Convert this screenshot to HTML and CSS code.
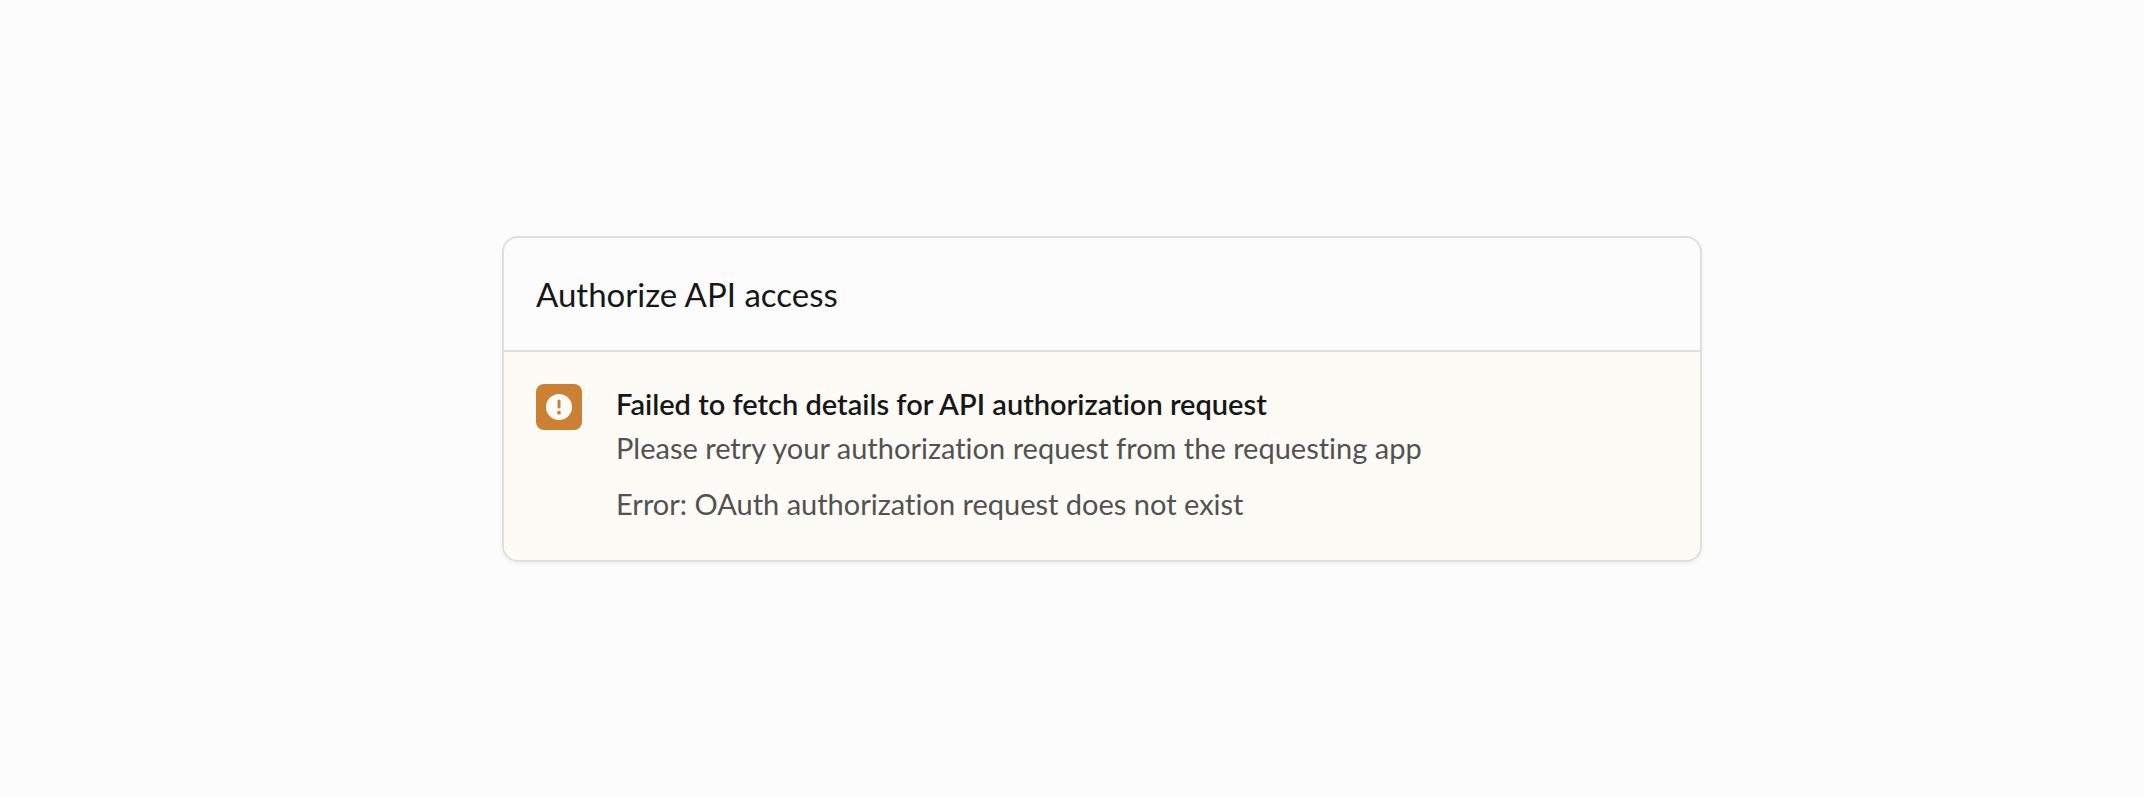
FILE: index.html
```html
<!DOCTYPE html>
<html lang="en">
<head>
    <meta charset="UTF-8">
    <meta name="viewport" content="width=device-width, initial-scale=1.0">
    <title>Authorize API access</title>
    <link rel="stylesheet" href="styles.css">
</head>
<body>

<main class="page">
    <section class="card">
        <header class="card-header">
            <h1>Authorize API access</h1>
        </header>
        <div class="alert" role="alert">
            <span class="alert-icon">
                <svg viewBox="0 0 26 26" width="26" height="26" aria-hidden="true">
                    <circle cx="13" cy="13" r="13" fill="#fdfcf7"/>
                    <rect x="11.5" y="5.4" width="3" height="9" rx="1.5" fill="#cb8034"/>
                    <circle cx="13" cy="18.7" r="1.9" fill="#cb8034"/>
                </svg>
            </span>
            <div class="alert-content">
                <h2>Failed to fetch details for API authorization request</h2>
                <p>Please retry your authorization request from the requesting app</p>
                <p class="error">Error: OAuth authorization request does not exist</p>
            </div>
        </div>
    </section>
</main>

</body>
</html>
```

FILE: styles.css
```css
:root {
    --bg: #fcfcfc;
    --border: #dfdfdf;
    --text: #171717;
    --text-light: #525252;
    --warning: #cb8034;
    --warning-bg: #fcfbf6;
}

* { box-sizing: border-box; }

body {
    margin: 0;
    background: var(--bg);
    color: var(--text);
    font-family: Lato, "Liberation Sans", sans-serif;
    font-variant-ligatures: none;
}

.page {
    display: flex;
    align-items: center;
    justify-content: center;
    min-height: 100vh;
    padding-left: 60px;
}

.card {
    width: 100%;
    max-width: 1200px;
    border: 2px solid var(--border);
    border-radius: 16px;
    overflow: hidden;
    box-shadow: 0 2px 4px rgba(0, 0, 0, 0.05);
}

.card-header {
    padding: 32px;
    border-bottom: 2px solid var(--border);
}

h1 { margin: 0; font-size: 33px; line-height: 48px; font-weight: 400; }

.alert {
    display: flex;
    align-items: flex-start;
    gap: 34px;
    padding: 32px 32px 36px;
    background: var(--warning-bg);
}

.alert-icon {
    display: flex;
    align-items: center;
    justify-content: center;
    flex-shrink: 0;
    width: 46px;
    height: 46px;
    border-radius: 8px;
    background: var(--warning);
}

.alert-content {
    font-size: 29px;
    line-height: 40px;
    color: var(--text-light);
}

.alert-content h2 { margin: 0 0 4px; font-size: 29px; font-weight: 600; color: var(--text); }
.alert-content p { margin: 0; }
.alert-content .error { margin-top: 16px; }
```
